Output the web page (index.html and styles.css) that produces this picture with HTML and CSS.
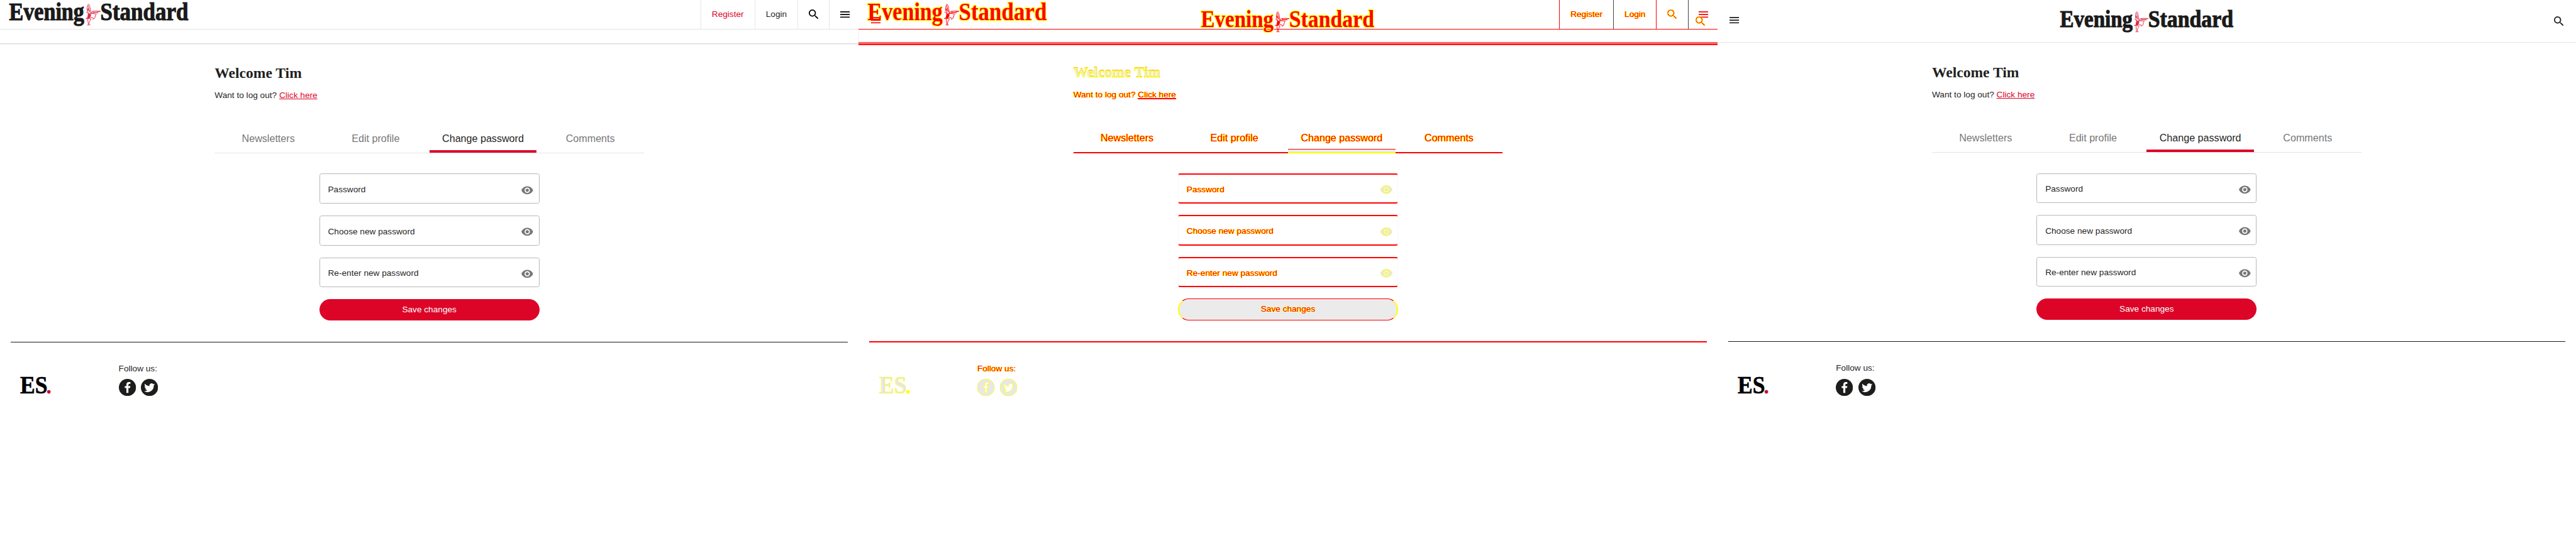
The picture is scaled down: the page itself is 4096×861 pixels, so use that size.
FILE: index.html
```html
<!DOCTYPE html>
<html lang="en">
<head>
<meta charset="utf-8">
<title>Evening Standard</title>
<link rel="stylesheet" href="styles.css">
</head>
<body>
<svg class="defs" width="0" height="0">
  <symbol id="logo" viewBox="0 0 336 42" overflow="visible">
    <g class="word">
      <text x="0.500" y="30.800" textLength="140" lengthAdjust="spacingAndGlyphs">Evening</text>
      <text x="170.500" y="30.800" textLength="164" lengthAdjust="spacingAndGlyphs">Standard</text>
    </g>
    <g class="figure">
      <path d="M148.500 .5Q151 3 151.500 8L153 17M148 1Q145 6 146 12L149 19M148 4L151 16M146 9L151 15M149 8L147 14"/>
      <path d="M144 15L149 19L147 26L143 28M149 19L157 17L171 14Q165 13 156 14L151 19M156 15L167 17M153 18L164 19"/>
      <path class="body" d="M148 19L153 20L151 26L147 27Z"/>
      <path d="M144 27L153 28L150 34L149 39M147 28L148 38M146 39.500H152M152 25L158 27M162 20L160 27L156 29"/>
    </g>
  </symbol>
  <symbol id="es" viewBox="0 0 58 38" overflow="visible">
    <text class="es-text" x="0" y="34" textLength="51" lengthAdjust="spacingAndGlyphs">ES</text>
    <circle class="es-dot" cx="53.500" cy="31.200" r="3.300"/>
  </symbol>
  <symbol id="search" viewBox="3 3 17.500 17.500">
    <path d="M15.500 14h-.79l-.28-.27A6.471 6.471 0 0 0 16 9.500 6.500 6.500 0 1 0 9.500 16c1.610 0 3.090-.59 4.230-1.570l.27.28v.79l5 4.990L20.490 19l-4.990-5zm-6 0C7.010 14 5 11.990 5 9.500S7.010 5 9.500 5 14 7.010 14 9.500 11.990 14 9.500 14z"/>
  </symbol>
  <symbol id="menu" viewBox="0 0 18 12"><path d="M0 0h18v2H0zM0 5h18v2H0zM0 10h18v2H0z"/></symbol>
  <symbol id="eye" viewBox="1 4 22 16">
    <path d="M12 4.500C7 4.500 2.730 7.610 1 12c1.730 4.390 6 7.500 11 7.500s9.270-3.110 11-7.500c-1.730-4.390-6-7.500-11-7.500zM12 17c-2.760 0-5-2.240-5-5s2.240-5 5-5 5 2.240 5 5-2.240 5-5 5zm0-8c-1.660 0-3 1.340-3 3s1.340 3 3 3 3-1.340 3-3-1.340-3-3-3z"/>
  </symbol>
  <symbol id="facebook" viewBox="0 0 32 32">
    <circle class="disc" cx="16" cy="16" r="16"/>
    <path class="mark" d="M14 26v-9h-3v-3.500h3v-2.500c0-3.300 1.800-5 4.700-5H21.500v3.500h-1.800c-1.500 0-1.900.7-1.900 1.900v2.100h3.700l-.5 3.500h-3.200v9z"/>
  </symbol>
  <symbol id="twitter" viewBox="0 0 32 32">
    <circle class="disc" cx="16" cy="16" r="16"/>
    <path class="mark" d="M26 10.300c-.7.300-1.500.5-2.300.6.800-.5 1.500-1.300 1.800-2.200-.8.500-1.700.8-2.600 1a4.100 4.100 0 0 0-7 3.700c-3.400-.2-6.400-1.800-8.400-4.300-1.100 1.900-.5 4.300 1.300 5.500-.7 0-1.300-.2-1.900-.5 0 2 1.400 3.700 3.300 4.100-.6.200-1.200.2-1.900.1.500 1.600 2 2.800 3.800 2.800A8.200 8.200 0 0 1 6 22.800 11.600 11.600 0 0 0 23.900 12.500c.8-.6 1.500-1.300 2.100-2.200z"/>
  </symbol>
</svg>

<div class="board">
  <section class="panel">
    <header class="topbar">
      <svg class="logo"><use href="#logo"/></svg>
      <nav class="tools">
        <a class="tool register">Register</a>
        <a class="tool login">Login</a>
        <a class="tool find"><svg class="i-search"><use href="#search"/></svg></a>
        <a class="tool burger"><svg class="i-menu"><use href="#menu"/></svg></a>
      </nav>
    </header>
    <div class="subnav"></div>
    <main class="account">
      <h1>Welcome Tim</h1>
      <p class="logout">Want to log out? <a>Click here</a></p>
      <nav class="tabs"><a>Newsletters</a><a>Edit profile</a><a class="active">Change password</a><a>Comments</a></nav>
      <form class="form">
        <label class="field"><span>Password</span><svg class="i-eye"><use href="#eye"/></svg></label>
        <label class="field"><span>Choose new password</span><svg class="i-eye"><use href="#eye"/></svg></label>
        <label class="field"><span>Re-enter new password</span><svg class="i-eye"><use href="#eye"/></svg></label>
        <button class="save" type="button">Save changes</button>
      </form>
    </main>
    <footer class="footer">
      <svg class="es"><use href="#es"/></svg>
      <div class="follow"><span>Follow us:</span><div class="social"><svg><use href="#facebook"/></svg><svg><use href="#twitter"/></svg></div></div>
    </footer>
  </section>

  <section class="panel diff">
    <header class="topbar">
      <svg class="logo"><use href="#logo"/></svg>
      <nav class="tools">
        <a class="tool register">Register</a>
        <a class="tool login">Login</a>
        <a class="tool find"><svg class="i-search"><use href="#search"/></svg></a>
        <a class="tool burger"><svg class="i-menu"><use href="#menu"/></svg></a>
      </nav>
    </header>
    <div class="subnav"></div>
    <div class="masthead overlay">
      <svg class="i-menu"><use href="#menu"/></svg>
      <svg class="logo"><use href="#logo"/></svg>
      <svg class="i-search"><use href="#search"/></svg>
    </div>
    <main class="account">
      <h1>Welcome Tim</h1>
      <p class="logout">Want to log out? <a>Click here</a></p>
      <nav class="tabs"><a>Newsletters</a><a>Edit profile</a><a class="active">Change password</a><a>Comments</a></nav>
      <form class="form">
        <label class="field"><span>Password</span><svg class="i-eye"><use href="#eye"/></svg></label>
        <label class="field"><span>Choose new password</span><svg class="i-eye"><use href="#eye"/></svg></label>
        <label class="field"><span>Re-enter new password</span><svg class="i-eye"><use href="#eye"/></svg></label>
        <button class="save" type="button">Save changes</button>
      </form>
    </main>
    <footer class="footer">
      <svg class="es"><use href="#es"/></svg>
      <div class="follow"><span>Follow us:</span><div class="social"><svg><use href="#facebook"/></svg><svg><use href="#twitter"/></svg></div></div>
    </footer>
  </section>

  <section class="panel">
    <header class="masthead">
      <svg class="i-menu"><use href="#menu"/></svg>
      <svg class="logo"><use href="#logo"/></svg>
      <svg class="i-search"><use href="#search"/></svg>
    </header>
    <main class="account">
      <h1>Welcome Tim</h1>
      <p class="logout">Want to log out? <a>Click here</a></p>
      <nav class="tabs"><a>Newsletters</a><a>Edit profile</a><a class="active">Change password</a><a>Comments</a></nav>
      <form class="form">
        <label class="field"><span>Password</span><svg class="i-eye"><use href="#eye"/></svg></label>
        <label class="field"><span>Choose new password</span><svg class="i-eye"><use href="#eye"/></svg></label>
        <label class="field"><span>Re-enter new password</span><svg class="i-eye"><use href="#eye"/></svg></label>
        <button class="save" type="button">Save changes</button>
      </form>
    </main>
    <footer class="footer">
      <svg class="es"><use href="#es"/></svg>
      <div class="follow"><span>Follow us:</span><div class="social"><svg><use href="#facebook"/></svg><svg><use href="#twitter"/></svg></div></div>
    </footer>
  </section>
</div>
</body>
</html>
```
FILE: styles.css
```css
* { box-sizing: border-box; }
html, body { margin: 0; overflow: hidden; background: #fff; }
svg { display: block; flex: none; overflow: visible; }
.defs { position: absolute; }

.board {
  display: flex;
  width: 4800px;
  height: 1009px;
  zoom: 0.853333;
  font: 16px/24px "Liberation Sans", Arial, sans-serif;
  color: #1f1f1f;
}

.panel {
  --ink: #1a1a1a;
  --word-edge: #1a1a1a;
  --word-edge-width: 1.3;
  --figure: #dc2a44;
  --es: #000;
  --es-dot: #c8102e;
  --es-edge: #000;
  --disc: #1d1d1b;
  --disc-edge: none;
  --mark-edge: none;
  position: relative;
  width: 1600px;
  flex: none;
}

/* Logo artwork */
.word { fill: var(--ink); stroke: var(--word-edge); stroke-width: var(--word-edge-width); paint-order: stroke; font: bold 46px "Liberation Serif", "Times New Roman", serif; }
.figure { fill: none; stroke: var(--figure); stroke-width: 1.1; }
.figure .body { fill: var(--figure); }
.es-text { fill: var(--es); stroke: var(--es-edge); stroke-width: .8; font: bold 47px "Liberation Serif", "Times New Roman", serif; }
.es-dot { fill: var(--es-dot); }
.disc { fill: var(--disc); stroke: var(--disc-edge); }
.mark { fill: #fff; stroke: var(--mark-edge); }

.i-search { width: 18px; height: 18px; }
.i-menu { width: 18px; height: 12px; }
.i-eye { width: 22px; height: 16px; fill: #777; }

/* Desktop header */
.topbar { display: flex; justify-content: space-between; height: 55px; border-bottom: 1px solid #e5e5e5; }
.topbar .logo { width: 336px; height: 42px; margin: 7px 0 0 16px; }
.tools { display: flex; }
.tool { display: flex; align-items: center; justify-content: center; border-left: 1px solid #e5e5e5; }
.register { width: 101px; color: #dc0528; }
.login { width: 80px; }
.find { width: 59px; }
.burger { width: 55px; padding-left: 3px; }
.tool svg { fill: #000; }
.subnav { height: 26px; box-shadow: 0 1px 2px rgba(0, 0, 0, .2); }

/* Compact header */
.masthead { display: flex; justify-content: space-between; height: 80px; padding: 0 23px; border-bottom: 1px solid #e5e5e5; }
.masthead .i-menu { margin-top: 32px; fill: #1f1a1c; }
.masthead .logo { width: 325px; height: 40.600px; margin-top: 21px; }
.masthead .i-search { margin-top: 31px; fill: #1f1a1c; }

/* Account page */
.account { width: 800px; margin: 0 auto; padding-top: 40px; }
h1 { margin: 0 0 13px; font: bold 27.600px/32px "Liberation Serif", "Times New Roman", serif; }
.logout { margin: 0 0 41px; }
.logout a { color: #dc0528; text-decoration: underline; }
.tabs { display: grid; grid-template-columns: repeat(4, 1fr); height: 55px; border-bottom: 1px solid #e5e5e5; font-size: 18.900px; color: #777; }
.tabs a { display: flex; align-items: center; justify-content: center; padding-top: 4px; border-bottom: 4.700px solid transparent; }
.tabs .active { color: #1f1f1f; border-color: #dc0528; }
.form { display: flex; flex-direction: column; gap: 22px; width: 410px; margin: 38px auto 40px; }
.field { display: flex; align-items: center; justify-content: space-between; height: 56px; padding: 5px 10px 0 15px; border: 1px solid #b8b8b8; border-radius: 4px; }
.save { height: 40px; padding: 0; border: 0; border-radius: 20px; background: #dc0528; color: #fff; font: inherit; }

.footer { display: flex; margin: 0 20px; padding: 37px 0 0 18px; border-top: 1px solid #1a1a1a; }
.es { width: 58px; height: 38px; margin: 24px 125px 0 0; }
.social { display: flex; gap: 10px; margin-top: 7px; }
.social svg { width: 32px; height: 32px; }

/* Comparison panel: changed pixels in red, edges in yellow, unchanged in grey */
.diff {
  --ink: #f00;
  --word-edge: #ff0;
  --word-edge-width: 3;
  --figure: #f00;
  --es: #e6e6e6;
  --es-dot: #ff0;
  --es-edge: #ff0;
  --disc: #e8e8e8;
  --disc-edge: #ff0;
  --mark-edge: #ff0;
  color: #f00;
}
.diff .topbar, .diff .tool { border-color: #f00; }
.diff .login, .diff .burger { border-color: #444; }
.diff .register, .diff .login, .diff .logout, .diff .tabs, .diff .field, .diff .save, .diff .follow { text-shadow: 1px 0 #ff0, -1px 0 #ff0; }
.diff .register { color: #f00; }
.diff svg, .diff .masthead svg, .diff .tool svg { fill: #f00; }
.diff .subnav { height: 25px; border-bottom: 1px solid #f00; box-shadow: 0 1.200px #fff, 0 4.300px #f00; }
.diff .i-search { stroke: #ff0; stroke-width: 1; }
.overlay { position: absolute; inset: 0 0 auto; }
.diff .overlay { border: 0; }
.diff h1 { color: #e8e8e8; -webkit-text-stroke: 1px #ff0; text-shadow: 0 -1px 0 #f60; }
.diff .logout a { color: #f00; text-decoration-thickness: 2.400px; }
.diff .tabs { height: 56px; border-bottom: 2.400px solid #f00; color: #f00; }
.diff .tabs .active { color: #f00; border-bottom-color: #ebebeb; box-shadow: 0 2.400px #ff0, inset 0 -1.200px #f00; }
.diff .form { gap: 21px; margin: 37px auto 39px; }
.diff .field { height: 57px; border: solid #f00; border-width: 2.400px 1.200px; border-left-color: #f7f7f7; border-right-color: #f7f7f7; }
.diff .i-eye.i-eye { fill: #e6e6e6; stroke: #ff0; stroke-width: 1; }
.diff .save { height: 41px; border: solid #ff0; border-width: 1.200px 2.400px; border-top-color: #f00; border-bottom-color: #f00; background: #ebebeb; color: #f00; }
.diff .footer { border-top: 2.400px solid #f00; }
```
